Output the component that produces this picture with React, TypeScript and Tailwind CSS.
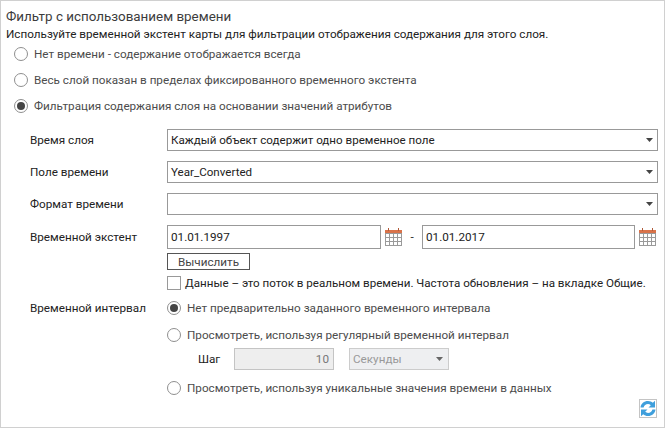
import React from "react";

function Radio({ checked, label }: { checked?: boolean; label: string }) {
  return (
    <label className="flex items-center gap-[6px] text-[#4c4c4c]">
      <span className="w-[14px] h-[14px] shrink-0 rounded-full border border-[#8f8f8f] bg-white flex items-center justify-center">
        {checked && <span className="w-[8px] h-[8px] rounded-full bg-[#444444]" />}
      </span>
      <span>{label}</span>
    </label>
  );
}

function Caret({ color = "#444444" }: { color?: string }) {
  return (
    <svg width="7" height="4" viewBox="0 0 7 4" className="shrink-0">
      <path d="M0 0h7L3.5 4z" fill={color} />
    </svg>
  );
}

function Select({ value }: { value?: string }) {
  return (
    <div className="h-[22px] flex items-center justify-between border border-[#999999] bg-white pl-[3px] pr-[4px] text-[11.6px] text-[#222222]">
      <span>{value}</span>
      <Caret />
    </div>
  );
}

function CalendarIcon() {
  return (
    <svg width="17" height="18" viewBox="0 0 17 18" className="shrink-0">
      <rect x="0" y="2" width="17" height="3" fill="#d9734a" />
      <rect x="3" y="0" width="1" height="3" fill="#b05a38" />
      <rect x="13" y="0" width="1" height="3" fill="#b05a38" />
      <rect x="0.5" y="5.5" width="16" height="12" fill="#ffffff" stroke="#9a9a9a" />
      <path d="M4.5 6v11M8.5 6v11M12.5 6v11M1 9.5h15M1 13.5h15" stroke="#9a9a9a" fill="none" />
    </svg>
  );
}

function RefreshIcon() {
  return (
    <svg width="16" height="17" viewBox="0 0 16 17">
      <path d="M0.5 7.5C1 3.5 4 1 8 1c2 0 3.6.7 4.8 1.8L15 .8V7.5H8.5l2.3-2.3C10 4.5 9 4 8 4 5.8 4 4.2 5.3 3.6 7.5z" fill="#3f9fdc" />
      <path d="M15.5 9.5C15 13.5 12 16 8 16c-2 0-3.6-.7-4.8-1.8L1 16.2V9.5h6.5l-2.3 2.3C6 12.5 7 13 8 13c2.2 0 3.8-1.3 4.4-3.5z" fill="#3f9fdc" />
    </svg>
  );
}

export default function App() {
  return (
    <div
      className="w-[665px] h-[428px] border border-[#d0d0d0] bg-white text-[11.7px] leading-[16px] text-[#222222] flex flex-col pl-[5px] pt-[7px] overflow-hidden"
      style={{ fontFamily: 'Roboto, "Open Sans", sans-serif' }}
    >
      <h1 className="text-[13.4px] leading-[18px] text-[#3c3c3c]">Фильтр с использованием времени</h1>
      <p className="h-[16px] whitespace-nowrap">
        Используйте временной экстент карты для фильтрации отображения содержания для этого слоя.
      </p>

      <div className="flex flex-col gap-[10px] mt-[4px] pl-[8px]">
        <Radio label="Нет времени - содержание отображается всегда" />
        <Radio label="Весь слой показан в пределах фиксированного временного экстента" />
        <Radio checked label="Фильтрация содержания слоя на основании значений атрибутов" />
      </div>

      <div className="grid grid-cols-[137px_491px] ml-[24px] mt-[15px] items-center gap-y-[10px]">
        <span>Время слоя</span>
        <Select value="Каждый объект содержит одно временное поле" />
        <span>Поле времени</span>
        <Select value="Year_Converted" />
        <span>Формат времени</span>
        <Select />
        <span>Временной экстент</span>
        <div className="flex items-center">
          <div className="w-[214px] h-[24px] border border-[#999999] pl-[3px] flex items-center">01.01.1997</div>
          <span className="ml-[4px]"><CalendarIcon /></span>
          <span className="w-[20px] text-center">-</span>
          <div className="w-[213px] h-[24px] border border-[#999999] pl-[3px] flex items-center">01.01.2017</div>
          <span className="ml-[4px]"><CalendarIcon /></span>
        </div>
      </div>

      <div className="ml-[161px] mt-[4px] flex flex-col">
        <button className="w-[83px] h-[17px] border border-[#555555] bg-white text-[#444444] flex items-center justify-center">
          Вычислить
        </button>
        <label className="flex items-center gap-[4px] mt-[5px] whitespace-nowrap">
          <span className="w-[14px] h-[14px] border border-[#999999] bg-white shrink-0" />
          <span className="text-[11.6px]">Данные – это поток в реальном времени. Частота обновления – на вкладке Общие.</span>
        </label>
      </div>

      <div className="grid grid-cols-[137px_1fr] ml-[24px] mt-[9px]">
        <span>Временной интервал</span>
        <div className="flex flex-col">
          <Radio checked label="Нет предварительно заданного временного интервала" />
          <div className="mt-[11px]">
            <Radio label="Просмотреть, используя регулярный временной интервал" />
          </div>
          <div className="flex items-center mt-[5px]">
            <span className="w-[36px] ml-[31px]">Шаг</span>
            <div className="w-[100px] h-[22px] border border-[#c4c4c4] bg-[#eeeeee] text-[#777777] flex items-center justify-end pr-[4px]">10</div>
            <div className="w-[100px] h-[22px] ml-[15px] border border-[#cccccc] bg-[#eeeff1] text-[#999999] flex items-center justify-between pl-[3px] pr-[5px]">
              <span>Секунды</span>
              <Caret color="#666666" />
            </div>
          </div>
          <div className="mt-[10px]">
            <Radio label="Просмотреть, используя уникальные значения времени в данных" />
          </div>
        </div>
      </div>

      <div className="flex justify-end pr-[7px] mt-[3px]">
        <button className="w-[18px] h-[19px] border border-[#c4c4c4] flex items-center justify-center">
          <RefreshIcon />
        </button>
      </div>
    </div>
  );
}
